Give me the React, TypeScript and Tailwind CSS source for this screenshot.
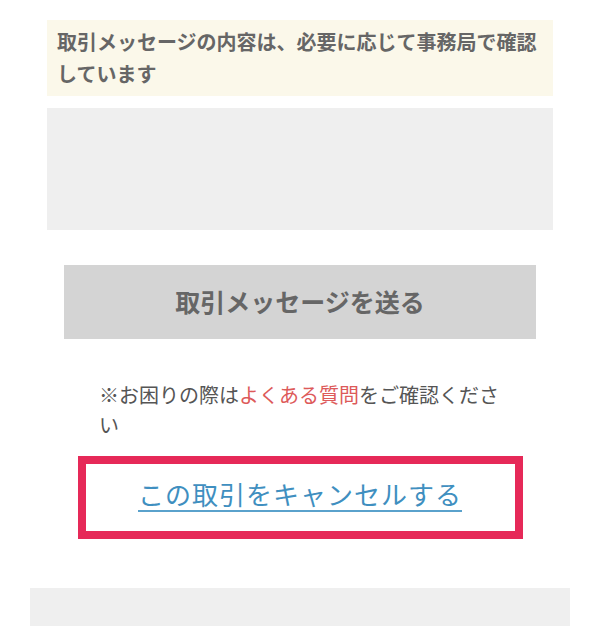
import React from "react";

export default function App() {
  return (
    <div
      className="w-[600px] h-[628px] bg-white overflow-hidden flex flex-col items-center"
      style={{ fontFamily: '"Noto Sans CJK JP", "Noto Sans", sans-serif' }}
    >
      <div className="mt-[20px] w-[506px] h-[76px] bg-[#fbf8ea] px-[10px] py-[6px] text-[20px] leading-[32px] font-bold text-[#666666]">
        取引メッセージの内容は、必要に応じて事務局で確認しています
      </div>
      <div className="mt-[12px] w-[506px] h-[122px] bg-[#efefef]" />
      <button className="mt-[35px] w-[472px] h-[74px] bg-[#d4d4d4] text-[25px] font-bold text-[#666666] flex items-center justify-center">
        取引メッセージを送る
      </button>
      <p className="mt-[41px] w-[402px] text-[20px] leading-[30px] text-[#555555]">
        ※お困りの際は<span className="text-[#dd5a5a]">よくある質問</span>をご確認ください
      </p>
      <div className="mt-[16px] w-[445px] h-[83px] border-[8px] border-[#e62958] flex items-center justify-center">
        <span className="text-[26px] tracking-[1px] leading-[32px] text-[#3f8fc0] border-b-[2px] border-[#5aa2cc] pb-[0px] mb-[6px]">
          この取引をキャンセルする
        </span>
      </div>
      <div className="mt-[49px] w-[540px] h-[38px] bg-[#efefef]" />
    </div>
  );
}
